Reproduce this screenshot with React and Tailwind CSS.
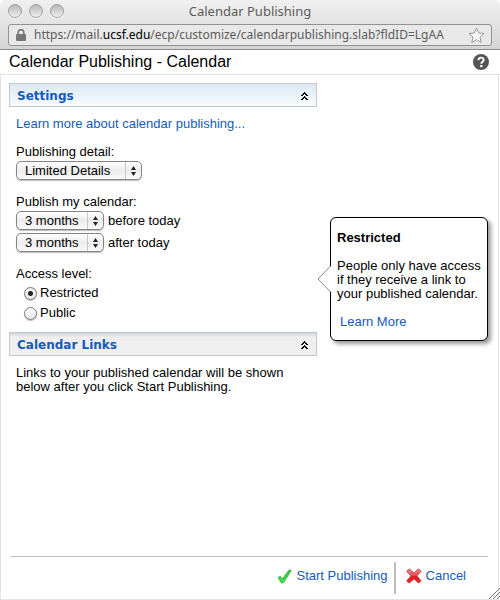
import { useState } from "react";

const levels = [
  { id: "restricted", name: "Restricted" },
  { id: "public", name: "Public" },
];

const months = ["1 month", "3 months", "6 months", "12 months"];

function TrafficLight({ label }) {
  return (
    <button
      type="button"
      aria-label={label}
      className="size-[14px] rounded-full border border-[#a0a0a0] bg-linear-to-b from-[#b8b8b8] via-[#d2d2d2] to-[#f0f0f0] shadow-[0_1px_0_#f8f8f8]"
    ></button>
  );
}

function Panel({ title, headerClass, children }) {
  const [open, setOpen] = useState(true);
  return (
    <section>
      <header
        className={`flex h-6 items-center justify-between border border-[#c3c6cd] pt-[2px] pr-2 pl-[7px] ${headerClass}`}
      >
        <h2 className="font-['DejaVu_Sans',sans-serif] text-[12px] font-bold text-[#125bbd]">
          {title}
        </h2>
        <button
          type="button"
          aria-label={`Toggle ${title}`}
          onClick={() => setOpen(!open)}
        >
          <svg
            width="7"
            height="8"
            viewBox="0 0 7 8"
            fill="#000"
            shapeRendering="crispEdges"
            className={open ? "" : "rotate-180"}
          >
            <path d="M3 0h1v1h1v1h1v1h1v1H5V3H4V2H3v1H2v1H0V3h1V2h1V1h1z" />
            <path d="M3 4h1v1h1v1h1v1h1v1H5V7H4V6H3v1H2v1H0V7h1V6h1V5h1z" />
          </svg>
        </button>
      </header>
      {open && <div className="pl-[7px]">{children}</div>}
    </section>
  );
}

function Select({ id, value, options, className, ...rest }) {
  return (
    <div className={`relative h-[19px] ${className}`}>
      <select
        id={id}
        defaultValue={value}
        className="h-full w-full appearance-none rounded-[5px] border border-[#858585] bg-linear-to-b from-white via-[#ececec] to-[#fafafa] pl-2 text-[13px] leading-4 shadow-[0_1px_1px_#bbb]"
        {...rest}
      >
        {options.map((option) => (
          <option key={option}>{option}</option>
        ))}
      </select>
      <span className="pointer-events-none absolute inset-y-px right-px flex w-4 items-center justify-center border-l border-[#c8c8c8]">
        <svg width="5" height="10" viewBox="0 0 5 10" fill="#222">
          <path d="M2.500 0 5 4H0z" />
          <path d="M2.500 10 0 6h5z" />
        </svg>
      </span>
    </div>
  );
}

function Callout() {
  return (
    <aside className="absolute top-[142px] right-[10px] w-[158px] rounded-[6px] border border-black bg-white px-[6px] pt-[13px] pb-[11px] shadow-[3px_3px_4px_#999]">
      <svg
        width="15"
        height="30"
        viewBox="0 0 15 30"
        className="absolute top-[46px] -left-[14px]"
      >
        <path d="M15 1 1 15l14 14z" fill="#fff" />
        <path d="M14 1.500 1 15l13 13.500" fill="none" stroke="#888" />
      </svg>
      <h3 className="font-bold">Restricted</h3>
      <p className="mt-[14px] whitespace-nowrap">
        People only have access
        <br />
        if they receive a link to
        <br />
        your published calendar.
      </p>
      <a href="#learn" className="mt-[14px] ml-[3px] block text-[#125bbd]">
        Learn More
      </a>
    </aside>
  );
}

export default function App() {
  const [level, setLevel] = useState("restricted");

  return (
    <div className="flex min-h-screen flex-col bg-white font-['Liberation_Sans',Arial,sans-serif] text-[13px] leading-[14px] text-black">
      <header className="h-[50px] rounded-t-[5px] border-b border-[#8c8c8c] bg-linear-to-b from-[#f0f0f0] to-[#d4d4d4] px-2 font-['Noto_Sans',sans-serif] text-[#5c5c5c]">
        <div className="grid h-6 grid-cols-[1fr_auto_1fr] items-center pb-[2px]">
          <div className="flex gap-[7px]">
            <TrafficLight label="Close" />
            <TrafficLight label="Minimize" />
            <TrafficLight label="Zoom" />
          </div>
          <h1 className="text-[13px]">Calendar Publishing</h1>
        </div>
        <div className="flex h-[22px] items-center rounded-[3px] border border-[#929292] bg-[#e8e8e8] pr-[6px] pl-[7px]">
          <svg width="10" height="12" viewBox="0 0 10 12" className="shrink-0">
            <path
              d="M2.200 6V3.500a2.800 2.800 0 0 1 5.600 0V6"
              fill="none"
              stroke="#777"
              strokeWidth="1.600"
            />
            <rect y="5" width="10" height="7" rx="1" fill="#777" />
          </svg>
          <p className="ml-2 flex-1 text-[12px] leading-4 whitespace-nowrap">
            https://mail.<span className="text-black">ucsf.edu</span>
            /ecp/customize/calendarpublishing.slab?fldID=LgAA
          </p>
          <button type="button" aria-label="Bookmark">
            <svg width="17" height="17" viewBox="0 0 17 17">
              <path
                d="m8.500 1 2.200 5 5.300.500-4 3.600 1.200 5.400-4.700-2.800-4.700 2.800L5 10.100 1 6.500 6.300 6z"
                fill="#fafafa"
                stroke="#999"
              />
            </svg>
          </button>
        </div>
      </header>

      <div className="flex h-[25px] items-center justify-between border-b border-[#e3e3e3] pr-[11px] pl-[9px]">
        <h2 className="text-[16px] leading-5">Calendar Publishing - Calendar</h2>
        <button type="button" aria-label="Help">
          <svg width="16" height="16" viewBox="0 0 16 16">
            <circle cx="8" cy="8" r="8" fill="#555" />
            <path
              d="M5.400 6.200c0-3.400 5.300-3.300 5.300-.300 0 1.900-2.400 1.900-2.400 3.900"
              fill="none"
              stroke="#fff"
              strokeWidth="1.900"
            />
            <rect x="7.200" y="11" width="2.200" height="2.200" fill="#fff" />
          </svg>
        </button>
      </div>

      <div className="relative mr-[1px] flex flex-1 flex-col border border-t-0 border-[#e3e3e3] pt-2">
        <main className="ml-2 w-[308px]">
          <Panel
            title="Settings"
            headerClass="bg-linear-to-b from-[#dce9f5] to-[#f8fbfd]"
          >
            <a href="#about" className="mt-[10px] block text-[#125bbd]">
              Learn more about calendar publishing...
            </a>
            <label htmlFor="detail" className="mt-[14px] block">
              Publishing detail:
            </label>
            <Select
              id="detail"
              value="Limited Details"
              options={["Availability Only", "Limited Details", "Full Details"]}
              className="mt-[2px] w-[126px]"
            />
            <p className="mt-[15px]">Publish my calendar:</p>
            <div className="mt-[2px] flex items-center gap-1">
              <Select
                id="before"
                value="3 months"
                options={months}
                className="w-[88px]"
              />
              <label htmlFor="before">before today</label>
            </div>
            <div className="mt-[3px] flex items-center gap-1">
              <Select
                id="after"
                value="3 months"
                options={months}
                className="w-[88px]"
              />
              <label htmlFor="after">after today</label>
            </div>
            <fieldset className="mt-[15px]">
              <legend>Access level:</legend>
              <div className="mt-[2px] ml-2 pb-[9px]">
                {levels.map(({ id, name }) => (
                  <label key={id} className="flex h-5 items-center gap-[3px]">
                    <input
                      type="radio"
                      name="level"
                      checked={level === id}
                      onChange={() => setLevel(id)}
                      className="size-[13px] appearance-none rounded-full border border-[#777] bg-linear-to-b from-white to-[#e8e8e8] shadow-[0_1px_1px_#bbb] checked:bg-[radial-gradient(circle,#222_2px,#eee_3px)]"
                    />
                    {name}
                  </label>
                ))}
              </div>
            </fieldset>
          </Panel>

          <Panel
            title="Calendar Links"
            headerClass="bg-linear-to-b from-[#d5d7de] via-[#efefef] via-20% to-[#f0f0f0]"
          >
            <p className="mt-[10px]">
              Links to your published calendar will be shown
              <br />
              below after you click Start Publishing.
            </p>
          </Panel>
        </main>

        <Callout />

        <footer className="mt-auto mr-[10px] ml-[10px] flex h-[43px] items-start justify-end border-t border-[#bdbdbd] pt-[5px] pr-[22px] text-[#125bbd]">
          <button
            type="button"
            className="flex h-8 items-center gap-1 border-r-2 border-[#bdbdbd] pr-[6px] pb-[4px]"
          >
            <svg width="15" height="15" viewBox="0 0 15 15">
              <linearGradient id="tick" x2="0" y2="1">
                <stop stopColor="#35c13f" />
                <stop offset="1" stopColor="#4be04f" />
              </linearGradient>
              <path
                d="M1 8.800 3.200 7.200l2.200 2.600L12.200.800l2 .900L6.300 14H4.500z"
                fill="url(#tick)"
                stroke="#27ae35"
                strokeWidth=".7"
                strokeLinejoin="round"
              />
            </svg>
            Start Publishing
          </button>
          <button
            type="button"
            className="ml-[10px] flex h-8 items-center gap-1 pb-[4px]"
          >
            <svg width="16" height="16" viewBox="0 0 16 16">
              <linearGradient id="cross" x2="0" y2="1">
                <stop stopColor="#ef8088" />
                <stop offset=".45" stopColor="#e4505a" />
                <stop offset=".55" stopColor="#df1620" />
                <stop offset="1" stopColor="#ee2c34" />
              </linearGradient>
              <path
                d="M3.500 1 8 5l4-4q2.500.300 3 2.500L11 8l4 4.500q-.500 2-2.800 2.500L8 11l-4.500 4Q1 14.500.800 12.500L5 8 .800 3.800Q1 1.500 3.500 1z"
                fill="url(#cross)"
                stroke="#cc3a42"
                strokeWidth=".7"
                strokeLinejoin="round"
              />
            </svg>
            Cancel
          </button>
        </footer>
        <svg
          width="12"
          height="12"
          viewBox="0 0 12 12"
          className="absolute -right-[2px] bottom-0"
          stroke="#777"
        >
          <path d="M1 12 12 1M5 12l7-7M9 12l3-3" />
        </svg>
      </div>
    </div>
  );
}
